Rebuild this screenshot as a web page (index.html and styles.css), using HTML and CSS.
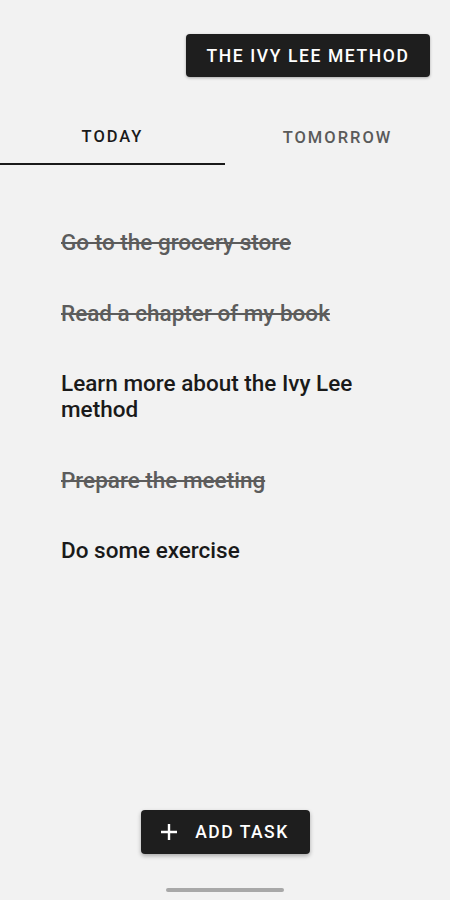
FILE: index.html
```html
<!DOCTYPE html>
<html lang="en">
<head>
    <meta charset="UTF-8">
    <meta name="viewport" content="width=device-width, initial-scale=1.0">
    <title>The Ivy Lee Method</title>
    <link rel="stylesheet" href="styles.css">
</head>
<body>
    <div class="app">
        <div class="top">
            <button class="method-btn">THE IVY LEE METHOD</button>
        </div>
        <div class="tabs">
            <div class="tab active">TODAY</div>
            <div class="tab">TOMORROW</div>
        </div>
        <ul class="tasks">
            <li class="task done">Go to the grocery store</li>
            <li class="task done">Read a chapter of my book</li>
            <li class="task">Learn more about the Ivy Lee method</li>
            <li class="task done">Prepare the meeting</li>
            <li class="task">Do some exercise</li>
        </ul>
        <div class="bottom">
            <button class="add-btn">
                <svg width="16" height="16" viewBox="0 0 16 16">
                    <path d="M8 0v16M0 8h16" stroke="#fff" stroke-width="2.4"/>
                </svg>
                <span>ADD TASK</span>
            </button>
            <div class="home-bar"></div>
        </div>
    </div>
</body>
</html>
```
FILE: styles.css
```css
*{
    margin: 0;
    padding: 0;
    box-sizing: border-box;
}
body{
    background-color: #f2f2f2;
    font-family: Roboto, "Liberation Sans", sans-serif;
}
.app{
    width: 450px;
    height: 900px;
    display: flex;
    flex-direction: column;
}
.top{
    display: flex;
    justify-content: flex-end;
    padding: 34px 20px 0 0;
}
.method-btn{
    width: 244px;
    height: 43px;
    border: none;
    border-radius: 4px;
    background-color: #1e1e1e;
    color: #fff;
    font-family: Roboto, "Liberation Sans", sans-serif;
    font-size: 17.5px;
    font-weight: 500;
    letter-spacing: 1.6px;
    box-shadow: 0 1px 3px rgba(0, 0, 0, 0.3);
}
.tabs{
    display: flex;
    margin-top: 33px;
}
.tab{
    flex: 1;
    height: 55px;
    display: flex;
    justify-content: center;
    align-items: center;
    font-size: 16.5px;
    font-weight: 500;
    letter-spacing: 2px;
    color: #5a5a5a;
}
.tab.active{
    color: #1a1a1a;
    border-bottom: 2px solid #1a1a1a;
}
.tasks{
    list-style: none;
    padding: 64px 59px 0 61px;
    flex: 1;
}
.task{
    font-size: 22.5px;
    font-weight: 500;
    line-height: 26px;
    color: #1a1a1a;
    margin-bottom: 44.5px;
}
.task.done{
    color: #5c5c5c;
    text-decoration: line-through;
}
.bottom{
    display: flex;
    flex-direction: column;
    align-items: center;
    padding-bottom: 8px;
}
.add-btn{
    width: 169px;
    height: 44px;
    display: flex;
    align-items: center;
    justify-content: center;
    gap: 18px;
    border: none;
    border-radius: 4px;
    background-color: #1e1e1e;
    color: #fff;
    font-family: Roboto, "Liberation Sans", sans-serif;
    font-size: 17.5px;
    font-weight: 500;
    letter-spacing: 1.5px;
    box-shadow: 0 2px 4px rgba(0, 0, 0, 0.3);
}
.home-bar{
    width: 118px;
    height: 4px;
    border-radius: 2px;
    background-color: #a8a8a8;
    margin-top: 34px;
}
```
